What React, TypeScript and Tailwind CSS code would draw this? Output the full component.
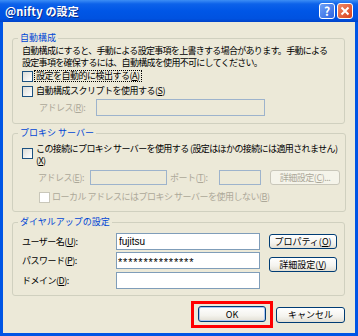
import React from 'react';

function Acc({ k }: { k: string }) {
  return (
    <>
      (<span className="underline underline-offset-[1px]">{k}</span>)
    </>
  );
}

function Check({ disabled }: { disabled?: boolean }) {
  return disabled ? (
    <span className="inline-block w-[11px] h-[11px] shrink-0 border border-[#C9C7BA] bg-white" />
  ) : (
    <span className="inline-block w-[11px] h-[11px] shrink-0 border border-[#1C5180] bg-[linear-gradient(135deg,#DCDCD7,#FFFFFF)]" />
  );
}

function Group({ title, className, children }: { title: string; className: string; children: React.ReactNode }) {
  return (
    <fieldset className={`ml-[9px] mr-[10px] border border-[#D0D0BF] rounded-[3px] px-[5px] ${className}`}>
      <legend className="px-[2px] text-[#0046D5] leading-[12px]">{title}</legend>
      <div className="pl-[4px] flex flex-col">{children}</div>
    </fieldset>
  );
}

const btn =
  'rounded-[3px] border border-[#003C74] bg-[linear-gradient(to_bottom,#FFFFFF_0%,#F4F3EE_60%,#E2DFD4_100%)] flex items-center justify-center leading-none';
const btnOff =
  'rounded-[3px] border border-[#C9C7BA] bg-[#F5F4EA] text-[#ACA899] flex items-center justify-center leading-none';

export default function App() {
  return (
    <div className="w-[358px] h-[336px] flex flex-col bg-[#0055E5] font-['Noto_Sans_CJK_JP',sans-serif] text-[9px] text-black">
      {/* Title bar */}
      <div className="h-[22px] shrink-0 flex items-center pl-[5px] pr-[5px] bg-[linear-gradient(to_bottom,#3D8EF5_0%,#0D62EA_18%,#0056E6_50%,#0052E0_85%,#0043C8_100%)]">
        <span className="text-white font-bold text-[11px] tracking-[0.2px] [text-shadow:1px_1px_0_#0A2C8C]">@nifty の設定</span>
        <div className="ml-auto flex gap-[2px]">
          <div className="w-[16px] h-[16px] rounded-[3px] border border-white bg-[linear-gradient(135deg,#6FA1F8,#2A63E0)] flex items-center justify-center text-white font-bold text-[12px] leading-none">?</div>
          <div className="w-[16px] h-[16px] rounded-[3px] border border-white bg-[linear-gradient(135deg,#F08A66,#D8401C)] flex items-center justify-center">
            <svg width="10" height="10" viewBox="0 0 10 10">
              <path d="M1.5 1.5 L8.5 8.5 M8.5 1.5 L1.5 8.5" stroke="white" strokeWidth="2" />
            </svg>
          </div>
        </div>
      </div>

      {/* Body */}
      <div className="flex-1 flex flex-col px-[3px] pb-[3px]">
        <div className="flex-1 flex flex-col bg-[#ECE9D8] pt-[10px] pb-[3px]">
          {/* 自動構成 */}
          <Group title="自動構成" className="">
            <div className="mt-[2px] leading-[10px] tracking-[-0.7px] whitespace-nowrap">
              <div>自動構成にすると、手動による設定事項を上書きする場合があります。手動による</div>
              <div className="mt-[2px]">設定事項を確保するには、自動構成を使用不可にしてください。</div>
            </div>
            <div className="mt-[2px] h-[12px] flex items-center gap-[1px]">
              <Check />
              <span className="border border-dotted border-black px-[1px] leading-[10px] tracking-[-0.5px]">
                設定を自動的に検出する<Acc k="A" />
              </span>
            </div>
            <div className="mt-[3px] h-[12px] flex items-center gap-[3px]">
              <Check />
              <span className="tracking-[-0.5px]">
                自動構成スクリプトを使用する<Acc k="S" />
              </span>
            </div>
            <div className="mt-[2px] h-[17px] flex items-center">
              <span className="ml-[17px] w-[57px] text-[#ACA899] tracking-[-0.5px]">
                アドレス<Acc k="R" />:
              </span>
              <div className="w-[169px] h-[17px] border border-[#9DB3CC]" />
            </div>
            <div className="h-[7px]" />
          </Group>

          {/* プロキシ サーバー */}
          <Group title="プロキシ サーバー" className="mt-[3px]">
            <div className="mt-[5px] flex items-start gap-[3px]">
              <span className="mt-[4px]">
                <Check />
              </span>
              <div className="leading-[10px] tracking-[-0.6px] whitespace-nowrap">
                <div>この接続にプロキシ サーバーを使用する (設定はほかの接続には適用されません)</div>
                <div className="mt-[2px]">
                  <Acc k="X" />
                </div>
              </div>
            </div>
            <div className="mt-[4px] h-[15px] flex items-center text-[#ACA899] tracking-[-0.5px]">
              <span className="ml-[16px] w-[52px]">
                アドレス<Acc k="E" />:
              </span>
              <div className="w-[77px] h-[15px] border border-[#9DB3CC]" />
              <span className="ml-[3px] w-[49px]">
                ポート<Acc k="T" />:
              </span>
              <div className="w-[42px] h-[15px] border border-[#9DB3CC]" />
              <div className={`ml-[9px] w-[70px] h-[15px] ${btnOff}`}>
                詳細設定<Acc k="C" />...
              </div>
            </div>
            <div className="mt-[6px] h-[12px] flex items-center gap-[2px] ml-[17px]">
              <Check disabled />
              <span className="text-[#ACA899] tracking-[-0.5px]">
                ローカル アドレスにはプロキシ サーバーを使用しない<Acc k="B" />
              </span>
            </div>
            <div className="h-[8px]" />
          </Group>

          {/* ダイヤルアップの設定 */}
          <Group title="ダイヤルアップの設定" className="mt-[4px]">
            <div className="mt-[5px] flex">
              <div className="flex flex-col gap-[2px]">
                <div className="h-[17px] flex items-center">
                  <span className="w-[94px] tracking-[-0.5px]">
                    ユーザー名<Acc k="U" />:
                  </span>
                  <div className="w-[144px] h-[17px] border border-[#7F9DB9] bg-white flex items-center pl-[2px] font-['Liberation_Sans',sans-serif] text-[10px]">
                    fujitsu
                  </div>
                </div>
                <div className="h-[17px] flex items-center">
                  <span className="w-[94px] tracking-[-0.5px]">
                    パスワード<Acc k="P" />:
                  </span>
                  <div className="w-[144px] h-[17px] border border-[#7F9DB9] bg-white flex items-center pl-[1px] font-['Liberation_Sans',sans-serif] text-[11px] tracking-[0.8px] leading-none pt-[4px]">
                    ***************
                  </div>
                </div>
                <div className="h-[17px] flex items-center mt-[1px]">
                  <span className="w-[94px] tracking-[-0.5px]">
                    ドメイン<Acc k="D" />:
                  </span>
                  <div className="w-[144px] h-[17px] border border-[#7F9DB9] bg-white" />
                </div>
              </div>
              <div className="ml-[9px] flex flex-col">
                <div className={`mt-[1px] w-[68px] h-[15px] ${btn}`}>
                  プロパティ<Acc k="O" />
                </div>
                <div className={`mt-[8px] w-[68px] h-[15px] ${btn}`}>
                  詳細設定<Acc k="V" />
                </div>
              </div>
            </div>
            <div className="h-[6px]" />
          </Group>

          {/* Buttons */}
          <div className="mt-[5px] flex justify-end items-center gap-[3px] pr-[10px]">
            <div className="border-[3px] border-[#FF0000] px-[4px] pt-[2px] pb-[3px]">
              <div className={`w-[68px] h-[16px] ${btn} shadow-[inset_0_0_0_1px_#A8C6F5]`}>OK</div>
            </div>
            <div className={`w-[69px] h-[16px] ${btn}`}>キャンセル</div>
          </div>
        </div>
      </div>
    </div>
  );
}
